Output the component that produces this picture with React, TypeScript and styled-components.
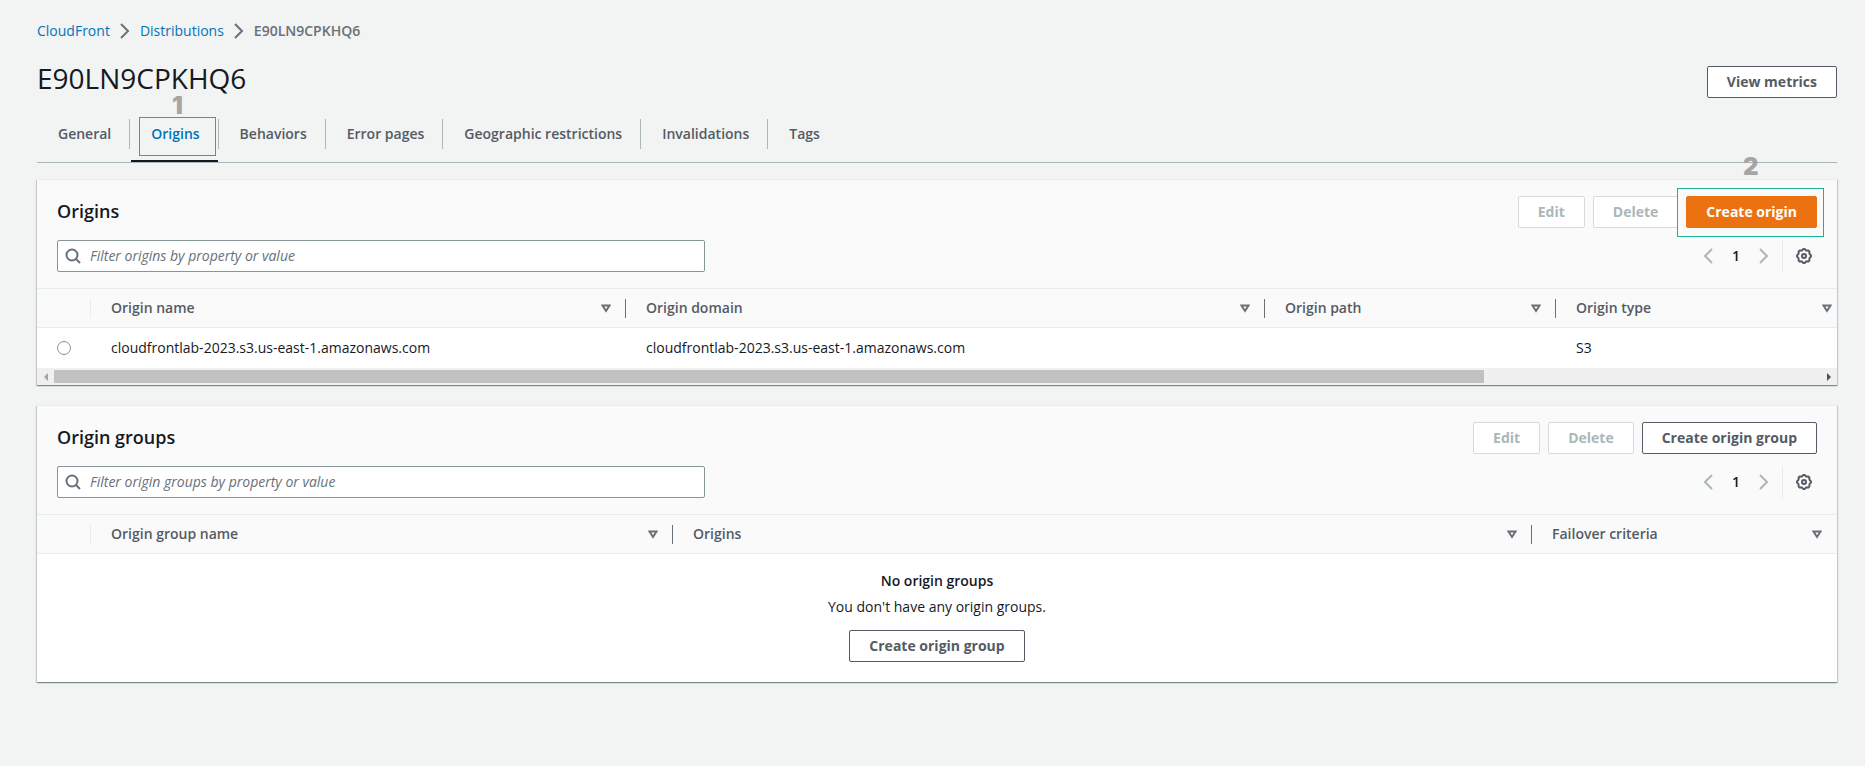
import React from 'react';
import styled, { createGlobalStyle } from 'styled-components';

const GlobalStyle = createGlobalStyle`
  *, *::before, *::after { box-sizing: border-box; }
  body {
    margin: 0;
    background: #f2f3f3;
    color: #16191f;
    font: 400 14px/22px 'Open Sans', 'Noto Sans', sans-serif;
  }
  h1, h2, p { margin: 0; }
  button, input { font: inherit; }
`;

const Page = styled.main`
  padding: 20px 28px 40px 37px;
`;

const Breadcrumbs = styled.nav`
  display: flex;
  align-items: center;
  gap: 7px;
`;

const CrumbLink = styled.a`
  color: #0073bb;
  text-decoration: none;
`;

const CrumbCurrent = styled.span`
  color: #687078;
  font-weight: 600;
`;

const TitleRow = styled.header`
  display: flex;
  justify-content: space-between;
  align-items: flex-end;
  height: 36px;
  margin: 20px 0 8px;
`;

const Title = styled.h1`
  align-self: flex-start;
  font-size: 28px;
  line-height: 32px;
  font-weight: 400;
`;

const Button = styled.button<{ $primary?: boolean }>`
  position: relative;
  height: 32px;
  padding: 0 19px;
  border: 1px solid ${p => (p.$primary ? '#ec7211' : '#545b64')};
  border-radius: 2px;
  background: ${p => (p.$primary ? '#ec7211' : '#fff')};
  color: ${p => (p.$primary ? '#fff' : '#545b64')};
  font-weight: 700;
  line-height: 22px;
  white-space: nowrap;
  &:disabled {
    border-color: #d5dbdb;
    color: #aab7b8;
  }
`;

const Tabs = styled.div`
  display: flex;
  border-bottom: 1px solid #aab7b8;
  margin-bottom: 16px;
`;

const Tab = styled.button<{ $active?: boolean }>`
  position: relative;
  display: flex;
  align-items: center;
  height: 56px;
  padding: 0 19px 0 21px;
  border: 0;
  background: none;
  color: ${p => (p.$active ? '#0073bb' : '#545b64')};
  font-weight: 600;
  &:not(:last-child)::before {
    content: '';
    position: absolute;
    right: 0;
    top: 13px;
    width: 1px;
    height: 30px;
    background: #aab7b8;
  }
  &::after {
    content: '';
    position: absolute;
    left: 1px;
    right: 1px;
    bottom: 0;
    height: 2px;
    background: ${p => (p.$active ? '#16191f' : 'transparent')};
  }
`;

const Marker = styled.span<{ $inset: string }>`
  position: absolute;
  z-index: 1;
  inset: ${p => p.$inset};
  border: 1px solid #1bb193;
  pointer-events: none;
`;

const MarkerNumber = styled.span<{ $lift: number }>`
  position: absolute;
  left: 0;
  right: 0;
  bottom: 100%;
  margin-bottom: ${p => p.$lift}px;
  color: #a5a5a5;
  font: 900 24px/18px Inter, sans-serif;
  text-align: center;
`;

const Panel = styled.section`
  margin-bottom: 20px;
  border-top: 1px solid #eaeded;
  background: #fff;
  box-shadow: 0 1px 1px 0 rgba(0, 28, 36, 0.3), 1px 1px 1px 0 rgba(0, 28, 36, 0.15),
    -1px 1px 1px 0 rgba(0, 28, 36, 0.15);
`;

const PanelHead = styled.div`
  display: flex;
  flex-direction: column;
  gap: 12px;
  padding: 16px 20px;
  background: #fafafa;
`;

const HeadRow = styled.div`
  display: flex;
  align-items: center;
  justify-content: space-between;
`;

const PanelTitle = styled.h2`
  padding-bottom: 2px;
  font-size: 18px;
  line-height: 28px;
  font-weight: 600;
`;

const Actions = styled.div`
  display: flex;
  gap: 8px;
`;

const SearchBox = styled.label`
  display: flex;
  align-items: center;
  flex: 0 1 648px;
  height: 32px;
  padding: 0 7px;
  gap: 9px;
  border: 1px solid #879596;
  border-radius: 2px;
  background: #fff;
  color: #687078;
`;

const SearchInput = styled.input`
  flex: 1;
  min-width: 0;
  padding: 0;
  border: 0;
  outline: 0;
  background: none;
  &::placeholder {
    color: #687078;
    font-style: italic;
    opacity: 1;
  }
`;

const Pager = styled.div`
  display: flex;
  align-items: center;
  height: 32px;
`;

const IconButton = styled.button<{ $muted?: boolean }>`
  display: flex;
  padding: 0;
  border: 0;
  background: none;
  color: ${p => (p.$muted ? '#aab7b8' : '#545b64')};
`;

const PageNumber = styled.span`
  width: 40px;
  text-align: center;
  font-weight: 600;
`;

const Settings = styled.div`
  display: flex;
  align-items: center;
  height: 32px;
  margin-left: 10px;
  padding: 0 5px 0 13px;
  border-left: 1px solid #eaeded;
`;

const TableClip = styled.div`
  overflow: hidden;
`;

const Table = styled.table<{ $overhang?: number }>`
  width: calc(100% + ${p => p.$overhang ?? 0}px);
  table-layout: fixed;
  border-collapse: separate;
  border-spacing: 0;
`;

const HeaderCell = styled.th`
  height: 40px;
  padding: 0;
  border: 1px solid #eaeded;
  border-width: 1px 0;
  background: #fafafa;
  color: #545b64;
  font-weight: 600;
  text-align: left;
`;

const HeaderInner = styled.div<{ $faint?: boolean }>`
  display: flex;
  align-items: center;
  justify-content: space-between;
  height: 19px;
  padding: 0 14px 0 20px;
  border-right: 1px solid ${p => (p.$faint ? '#eaeded' : '#687078')};
  ${HeaderCell}:last-child & { border-right-color: transparent; }
`;

const Cell = styled.td`
  height: 40px;
  padding: 0 20px;
`;

const Radio = styled.input`
  display: block;
  appearance: none;
  width: 14px;
  height: 14px;
  margin: 0;
  border: 1px solid #879596;
  border-radius: 50%;
  background: #fff;
`;

const ScrollBar = styled.div`
  display: flex;
  align-items: center;
  height: 17px;
  background: #f0f0f0;
`;

const ScrollArrow = styled.span<{ $dir: 'left' | 'right' }>`
  display: flex;
  justify-content: center;
  width: 17px;
  &::before {
    content: '';
    border: 4px solid transparent;
    border-width: 4px 0;
    ${p => (p.$dir === 'left' ? 'border-right: 4px solid #a3a3a3;' : 'border-left: 4px solid #505050;')}
  }
`;

const ScrollTrack = styled.div`
  flex: 1;
`;

const ScrollThumb = styled.div`
  width: 81%;
  height: 13px;
  background: #c1c1c1;
`;

const Empty = styled.div`
  display: flex;
  flex-direction: column;
  align-items: center;
  padding: 16px 0 20px;
`;

const EmptyTitle = styled.p`
  font-weight: 600;
`;

const EmptyText = styled.p`
  margin: 4px 0 12px;
`;

const Chevron = ({ left }: { left?: boolean }) => (
  <svg width="16" height="16" viewBox="0 0 16 16" fill="none" stroke="currentColor" strokeWidth="2" aria-hidden>
    <path d={left ? 'M12 1 5 8l7 7' : 'M4 1l7 7-7 7'} />
  </svg>
);

const CrumbSeparator = styled.span`
  display: flex;
  color: #687078;
`;

const SearchIcon = () => (
  <svg width="16" height="16" viewBox="0 0 16 16" fill="none" stroke="currentColor" strokeWidth="2" aria-hidden>
    <circle cx="7" cy="7" r="5.5" />
    <path d="M11 11l4 4" />
  </svg>
);

const gearPath = (() => {
  const points: string[] = [];
  for (let i = 0; i < 64; i++) {
    const a = (i / 64) * Math.PI * 2;
    const r = 6.5 + 0.5 * Math.tanh(2.5 * Math.cos(8 * a));
    points.push(`${(8 + r * Math.cos(a)).toFixed(2)} ${(8 + r * Math.sin(a)).toFixed(2)}`);
  }
  return `M${points.join('L')}Z`;
})();

const GearIcon = () => (
  <svg width="16" height="16" viewBox="0 0 16 16" fill="none" stroke="currentColor" strokeWidth="2" aria-hidden>
    <path d={gearPath} strokeLinejoin="round" />
    <circle cx="8" cy="8" r="2" />
  </svg>
);

const SortIcon = () => (
  <svg width="10" height="9" viewBox="0 0 10 9" fill="none" stroke="#687078" strokeWidth="2" aria-hidden>
    <path d="M1.5 1.5h7L5 7z" />
  </svg>
);

const Toolbar = ({ placeholder }: { placeholder: string }) => (
  <HeadRow>
    <SearchBox>
      <SearchIcon />
      <SearchInput type="search" placeholder={placeholder} aria-label={placeholder} />
    </SearchBox>
    <Pager>
      <IconButton $muted aria-label="Previous page"><Chevron left /></IconButton>
      <PageNumber>1</PageNumber>
      <IconButton $muted aria-label="Next page"><Chevron /></IconButton>
      <Settings>
        <IconButton aria-label="Preferences"><GearIcon /></IconButton>
      </Settings>
    </Pager>
  </HeadRow>
);

const TableHead = ({ columns, widths }: { columns: string[]; widths: number[] }) => (
  <>
    <colgroup>
      {widths.map((w, i) => <col key={i} width={w} />)}
    </colgroup>
    <thead>
      <tr>
        <HeaderCell><HeaderInner $faint /></HeaderCell>
        {columns.map(c => (
          <HeaderCell key={c} scope="col">
            <HeaderInner>{c}<SortIcon /></HeaderInner>
          </HeaderCell>
        ))}
      </tr>
    </thead>
  </>
);

const TABS = ['General', 'Origins', 'Behaviors', 'Error pages', 'Geographic restrictions', 'Invalidations', 'Tags'];
const DOMAIN = 'cloudfrontlab-2023.s3.us-east-1.amazonaws.com';

export default function App() {
  return (
    <>
      <GlobalStyle />
      <Page>
        <Breadcrumbs aria-label="Breadcrumbs">
          <CrumbLink href="#cloudfront">CloudFront</CrumbLink>
          <CrumbSeparator><Chevron /></CrumbSeparator>
          <CrumbLink href="#distributions">Distributions</CrumbLink>
          <CrumbSeparator><Chevron /></CrumbSeparator>
          <CrumbCurrent>E90LN9CPKHQ6</CrumbCurrent>
        </Breadcrumbs>
        <TitleRow>
          <Title>E90LN9CPKHQ6</Title>
          <Button>View metrics</Button>
        </TitleRow>
        <Tabs role="tablist">
          {TABS.map(t => (
            <Tab key={t} role="tab" aria-selected={t === 'Origins'} $active={t === 'Origins'}>
              {t}
              {t === 'Origins' && (
                <Marker $inset="11px 3px 6px 9px"><MarkerNumber $lift={3}>1</MarkerNumber></Marker>
              )}
            </Tab>
          ))}
        </Tabs>

        <Panel>
          <PanelHead>
            <HeadRow>
              <PanelTitle>Origins</PanelTitle>
              <Actions>
                <Button disabled>Edit</Button>
                <Button disabled>Delete</Button>
                <Button $primary>
                  Create origin
                  <Marker $inset="-9px -8px -10px -10px"><MarkerNumber $lift={13}>2</MarkerNumber></Marker>
                </Button>
              </Actions>
            </HeadRow>
            <Toolbar placeholder="Filter origins by property or value" />
          </PanelHead>
          <TableClip>
            <Table $overhang={10}>
              <TableHead
                columns={['Origin name', 'Origin domain', 'Origin path', 'Origin type']}
                widths={[54, 535, 639, 291, 291]}
              />
              <tbody>
                <tr>
                  <Cell><Radio type="radio" name="origin" aria-label={DOMAIN} /></Cell>
                  <Cell>{DOMAIN}</Cell>
                  <Cell>{DOMAIN}</Cell>
                  <Cell />
                  <Cell>S3</Cell>
                </tr>
              </tbody>
            </Table>
          </TableClip>
          <ScrollBar>
            <ScrollArrow $dir="left" />
            <ScrollTrack><ScrollThumb /></ScrollTrack>
            <ScrollArrow $dir="right" />
          </ScrollBar>
        </Panel>

        <Panel>
          <PanelHead>
            <HeadRow>
              <PanelTitle>Origin groups</PanelTitle>
              <Actions>
                <Button disabled>Edit</Button>
                <Button disabled>Delete</Button>
                <Button>Create origin group</Button>
              </Actions>
            </HeadRow>
            <Toolbar placeholder="Filter origin groups by property or value" />
          </PanelHead>
          <Table>
            <TableHead
              columns={['Origin group name', 'Origins', 'Failover criteria']}
              widths={[54, 582, 859, 305]}
            />
          </Table>
          <Empty>
            <EmptyTitle>No origin groups</EmptyTitle>
            <EmptyText>You don't have any origin groups.</EmptyText>
            <Button>Create origin group</Button>
          </Empty>
        </Panel>
      </Page>
    </>
  );
}
